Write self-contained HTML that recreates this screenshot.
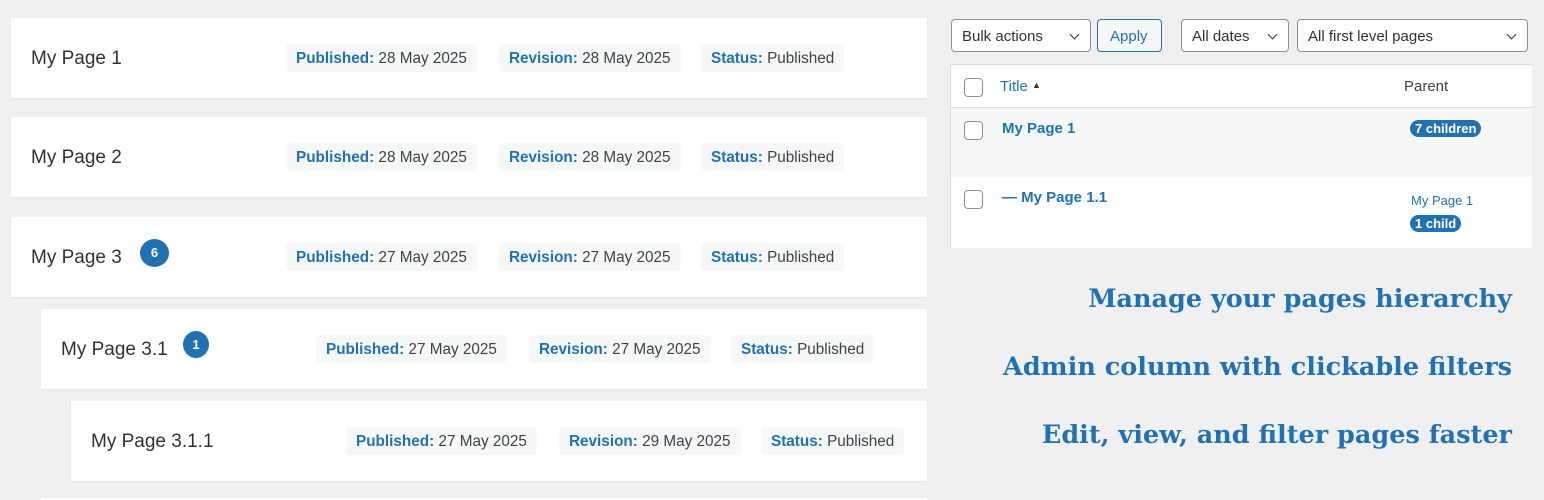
<!DOCTYPE html>
<html><head><style>
html,body{margin:0;width:1544px;height:500px;overflow:hidden}
body{background:#f0f0f1;font-family:"Liberation Sans",sans-serif;position:relative}
.card{position:absolute;background:#fff;height:80px;right:617px;box-shadow:0 1px 2px rgba(0,0,0,.06)}
.t{position:absolute;left:20px;top:30px;font-size:19px;color:#2c3338}
.b{position:absolute;top:22px;width:29px;height:28px;border-radius:50%;background:#2271b1;color:#fff;font-size:13px;font-weight:bold;text-align:center;line-height:28px}
.tag{position:absolute;top:26px;height:28px;line-height:29px;background:#f6f7f7;border-radius:4px;font-size:15.3px;color:#3c434a;padding:0 10px}
.tag b{color:#2271b1;font-weight:bold}
.sel{position:absolute;top:19px;height:33px;border:1px solid #8c8f94;border-radius:4px;background:#fff;font-size:15px;color:#2c3338;line-height:33px;padding-left:10px;box-sizing:border-box}
.sel:after{content:"";position:absolute;right:12px;top:11px;width:6px;height:6px;border-right:1.5px solid #2c3338;border-bottom:1.5px solid #2c3338;transform:rotate(45deg)}
.sel.ap:after{display:none}
.cb{position:absolute;left:13px;width:17px;height:17px;border:1px solid #8c8f94;border-radius:4px;background:#fff}
.h{position:absolute;right:32px;font-family:"DejaVu Serif",serif;font-weight:bold;font-size:25.5px;color:#2271b1;white-space:nowrap}
.pill{display:inline-block;background:#2271b1;color:#fff;font-size:13px;font-weight:bold;border-radius:10px;padding:1px 5px}
</style></head><body>
<div class="card" style="left:11px;top:18px"><div class="t">My Page 1</div>
<div class="tag" style="left:275px"><b>Published:</b> 28 May 2025</div><div class="tag" style="left:488px"><b>Revision:</b> 28 May 2025</div><div class="tag" style="left:690px"><b>Status:</b> Published</div></div>
<div class="card" style="left:11px;top:117px"><div class="t">My Page 2</div>
<div class="tag" style="left:275px"><b>Published:</b> 28 May 2025</div><div class="tag" style="left:488px"><b>Revision:</b> 28 May 2025</div><div class="tag" style="left:690px"><b>Status:</b> Published</div></div>
<div class="card" style="left:11px;top:217px"><div class="t">My Page 3</div><div class="b" style="left:129px">6</div>
<div class="tag" style="left:275px"><b>Published:</b> 27 May 2025</div><div class="tag" style="left:488px"><b>Revision:</b> 27 May 2025</div><div class="tag" style="left:690px"><b>Status:</b> Published</div></div>
<div class="card" style="left:41px;top:309px"><div class="t">My Page 3.1</div><div class="b" style="left:142px;width:26px;height:27px;line-height:27px">1</div>
<div class="tag" style="left:275px"><b>Published:</b> 27 May 2025</div><div class="tag" style="left:488px"><b>Revision:</b> 27 May 2025</div><div class="tag" style="left:690px"><b>Status:</b> Published</div></div>
<div class="card" style="left:71px;top:401px"><div class="t">My Page 3.1.1</div>
<div class="tag" style="left:275px"><b>Published:</b> 27 May 2025</div><div class="tag" style="left:488px"><b>Revision:</b> 29 May 2025</div><div class="tag" style="left:690px"><b>Status:</b> Published</div></div>
<div class="card" style="left:41px;top:498px;height:2px"></div>

<div class="sel" style="left:951px;width:140px">Bulk actions</div>
<div class="sel ap" style="left:1097px;width:65px;border-color:#2271b1;background:#f6f7f7;color:#2271b1;padding-left:12px">Apply</div>
<div class="sel" style="left:1181px;width:108px">All dates</div>
<div class="sel" style="left:1297px;width:231px">All first level pages</div>
<div style="position:absolute;left:950px;top:64px;width:581px;height:183px;background:#fff;border:1px solid #dcdcde;border-right:none;border-bottom:none">
<div style="height:42px;border-bottom:1px solid #dcdcde;position:relative">
<div class="cb" style="top:13px"></div>
<div style="position:absolute;left:49px;top:13px;font-size:15px;color:#2271b1">Title <span style="font-size:9px;color:#333;vertical-align:3px">▲</span></div>
<div style="position:absolute;left:453px;top:13px;font-size:15px;color:#3c434a">Parent</div></div>
<div style="height:69px;background:#f6f7f7;position:relative">
<div class="cb" style="top:13px"></div>
<div style="position:absolute;left:51px;top:12px;font-size:15px;font-weight:bold;color:#2271b1">My Page 1</div>
<div style="position:absolute;left:459px;top:12px"><span class="pill">7 children</span></div></div>
<div style="position:relative;height:70px">
<div class="cb" style="top:13px"></div>
<div style="position:absolute;left:51px;top:12px;font-size:15px;font-weight:bold;color:#2271b1">— My Page 1.1</div>
<div style="position:absolute;left:460px;top:16px;font-size:13px;color:#2271b1">My Page 1</div>
<div style="position:absolute;left:459px;top:38px"><span class="pill">1 child</span></div></div>
</div>
<div class="h" style="top:284px">Manage your pages hierarchy</div>
<div class="h" style="top:352px">Admin column with clickable filters</div>
<div class="h" style="top:420px">Edit, view, and filter pages faster</div>
</body></html>
